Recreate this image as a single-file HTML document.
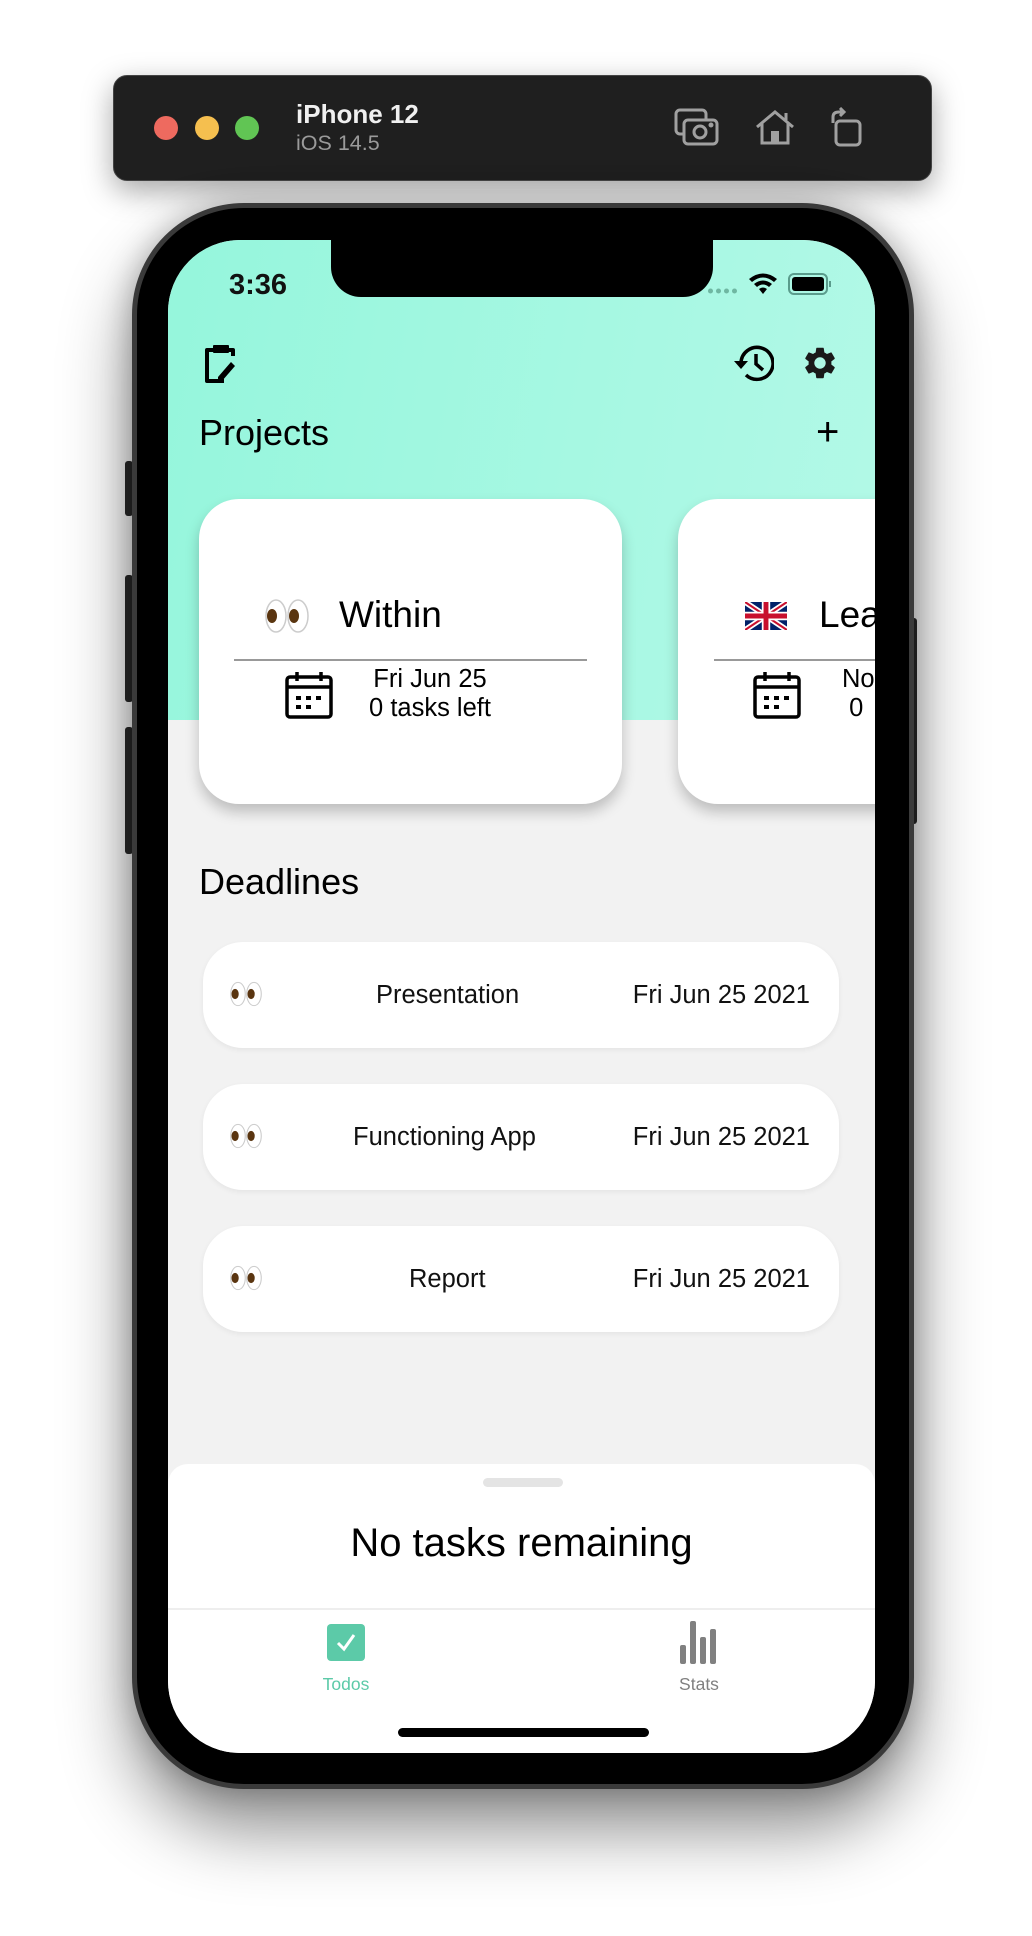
<!DOCTYPE html>
<html><head><meta charset="utf-8"><style>
*{margin:0;padding:0;box-sizing:border-box}
body{width:1032px;height:1936px;background:#fff;position:relative;overflow:hidden;font-family:"Liberation Sans",sans-serif}
.a{position:absolute}
.tb{left:113px;top:75px;width:819px;height:106px;background:#1f1f1f;border-radius:14px;border:1px solid #444;box-shadow:0 10px 30px rgba(0,0,0,.35)}
.dot{width:24px;height:24px;border-radius:50%;top:116px}
.phone{left:132px;top:203px;width:782px;height:1586px;border-radius:112px;background:#000;border:5px solid #3a3a3a;box-shadow:0 40px 70px rgba(0,0,0,.45),0 0 30px rgba(0,0,0,.25)}
.screen{left:168px;top:240px;width:707px;height:1513px;border-radius:72px;background:#f2f2f2;overflow:hidden}
.card{background:#fff;border-radius:40px;box-shadow:0 8px 14px rgba(0,0,0,.22)}
.row{left:35px;width:636px;height:106px;background:#fff;border-radius:40px;box-shadow:0 2px 6px rgba(0,0,0,.06)}
.row span{position:absolute;top:38px;font-size:25.5px;color:#111;line-height:30px}
</style></head><body>
<div class="a tb"></div>
<div class="a dot" style="left:154px;background:#ee6a5f"></div>
<div class="a dot" style="left:195px;background:#f5bf4f"></div>
<div class="a dot" style="left:235px;background:#61c554"></div>
<div class="a" style="left:296px;top:99px;color:#f0f0f0;font-size:26px;font-weight:bold">iPhone 12</div>
<div class="a" style="left:296px;top:131px;color:#9a9a9a;font-size:21.5px">iOS 14.5</div>
<svg class="a" style="left:674px;top:108px" width="46" height="38" viewBox="0 0 46 38" fill="none" stroke="#a0a0a0" stroke-width="3"><rect x="2" y="2" width="30" height="24" rx="4"/><rect x="10" y="12" width="33" height="24" rx="4" fill="#1f1f1f"/><circle cx="26" cy="24" r="6"/><circle cx="37" cy="17" r="1" fill="#a0a0a0"/></svg>
<svg class="a" style="left:755px;top:110px" width="40" height="36" viewBox="0 0 40 36" fill="none" stroke="#a0a0a0" stroke-width="3"><path d="M2 17 L20 2 L38 17 M7 13 V33 H33 V13 M31 3 V10"/><rect x="16" y="21" width="8" height="12" fill="#a0a0a0" stroke="none"/></svg>
<svg class="a" style="left:829px;top:107px" width="34" height="40" viewBox="0 0 34 40" fill="none" stroke="#a0a0a0" stroke-width="3"><rect x="7" y="14" width="24" height="24" rx="4"/><path d="M4 16 V10 Q4 5 10 5 H13"/><path d="M11 1 L15 5 L11 9" fill="#a0a0a0"/></svg>

<div class="a" style="left:125px;top:461px;width:8px;height:55px;background:#2a2a2a;border-radius:3px"></div>
<div class="a" style="left:125px;top:575px;width:8px;height:127px;background:#2a2a2a;border-radius:3px"></div>
<div class="a" style="left:125px;top:727px;width:8px;height:127px;background:#2a2a2a;border-radius:3px"></div>
<div class="a" style="left:909px;top:618px;width:8px;height:206px;background:#2a2a2a;border-radius:3px"></div>
<div class="a phone"></div>
<div class="a screen">
  <div class="a" style="left:0;top:0;width:707px;height:480px;background:linear-gradient(100deg,#95f6dc,#b3f9e7)"></div>
  <div class="a" style="left:163px;top:-5px;width:382px;height:62px;background:#000;border-radius:0 0 30px 30px"></div>
  <div class="a" style="left:61px;top:29px;font-size:29px;font-weight:bold;color:#111">3:36</div>
  <svg class="a" style="left:540px;top:30px" width="130" height="30" viewBox="0 0 130 30"><g fill="#6fb7a2"><circle cx="2.5" cy="21" r="2.5"/><circle cx="10.5" cy="21" r="2.5"/><circle cx="18.5" cy="21" r="2.5"/><circle cx="26.5" cy="21" r="2.5"/></g><path d="M41 9 Q55 -2 69 9 L66 12 Q55 3 44 12Z M46 14 Q55 7 64 14 L61 17 Q55 12 49 17Z M51 19 Q55 16 59 19 L55 24Z" fill="#000"/><rect x="81" y="4" width="38" height="20" rx="5" fill="none" stroke="#5a9c8c" stroke-width="2"/><rect x="84" y="7" width="32" height="14" rx="3" fill="#000"/><rect x="121" y="11" width="2" height="6" fill="#5a9c8c"/></svg>
  <svg class="a" style="left:34px;top:104px" width="36" height="40" viewBox="0 0 36 40"><path d="M11 6 H5 V37 H22 M27 6 H31 V12" fill="none" stroke="#000" stroke-width="4" stroke-linejoin="round"/><rect x="11" y="1" width="16" height="8" rx="1" fill="#000"/><path d="M16 33 L29 18 L33 22 L20 37 L16 37Z" fill="#000"/></svg>
  <svg class="a" style="left:564px;top:104px" width="42" height="38" viewBox="0 0 42 38"><path d="M9 19 A16 16 0 1 1 14 31" fill="none" stroke="#000" stroke-width="3.5"/><path d="M2 17 L9 25 L16 17Z" fill="#000"/><path d="M24 10 V20 L31 26" fill="none" stroke="#000" stroke-width="3.5"/></svg>
  <svg class="a" style="left:633px;top:104px" width="38" height="38" viewBox="0 0 24 24"><path fill="#1a1a1a" d="M19.14 12.94c.04-.3.06-.61.06-.94s-.02-.64-.07-.94l2.03-1.580a.49.49 0 0 0 .12-.61l-1.92-3.32a.49.49 0 0 0-.59-.22l-2.39.96c-.5-.38-1.030-.7-1.62-.94l-.36-2.54a.48.48 0 0 0-.48-.41h-3.84a.48.48 0 0 0-.47.41l-.36 2.54c-.59.24-1.13.57-1.62.94l-2.39-.96a.48.48 0 0 0-.59.22L2.74 8.87a.48.48 0 0 0 .12.61l2.03 1.58c-.05.3-.09.63-.09.94s.02.64.07.94l-2.03 1.58a.49.49 0 0 0-.12.61l1.92 3.32c.12.22.37.29.59.22l2.39-.96c.5.38 1.03.7 1.62.94l.36 2.54c.05.24.24.41.48.41h3.84c.24 0 .44-.17.47-.41l.36-2.54c.59-.24 1.13-.56 1.62-.94l2.39.96c.22.08.47 0 .59-.22l1.92-3.32a.48.48 0 0 0-.12-.61l-2.010-1.58zM12 15.6A3.6 3.6 0 1 1 12 8.4a3.6 3.6 0 0 1 0 7.2z"/></svg>
  <div class="a" style="left:31px;top:172px;font-size:36px;color:#000">Projects</div>
  <div class="a" style="left:648px;top:172px;font-size:40px;line-height:40px;color:#000">+</div>

  <div class="a card" style="left:31px;top:259px;width:423px;height:305px"></div>
  <svg class="a" style="left:97px;top:358px" width="44" height="36" viewBox="0 0 44 36"><ellipse cx="11" cy="18" rx="10" ry="16" fill="#fff" stroke="#ccc" stroke-width="1.5"/><ellipse cx="33" cy="18" rx="10" ry="16" fill="#fff" stroke="#ccc" stroke-width="1.5"/><ellipse cx="7" cy="18" rx="5" ry="7" fill="#5a3510"/><ellipse cx="29" cy="18" rx="5" ry="7" fill="#5a3510"/></svg>
  <div class="a" style="left:171px;top:354px;font-size:37px;color:#000">Within</div>
  <div class="a" style="left:66px;top:419px;width:353px;height:1.5px;background:#999"></div>
  <svg class="a" style="left:117px;top:431px" width="48" height="48" viewBox="0 0 48 48" fill="none" stroke="#000" stroke-width="3.5"><rect x="2" y="6" width="44" height="40" rx="3"/><path d="M2 16 H46 M12 1 V10 M36 1 V10"/><g fill="#000" stroke="none"><rect x="11" y="25" width="5" height="4"/><rect x="21" y="25" width="5" height="4"/><rect x="31" y="25" width="5" height="4"/><rect x="11" y="34" width="5" height="4"/><rect x="21" y="34" width="5" height="4"/></g></svg>
  <div class="a" style="left:172px;top:425px;width:180px;text-align:center;font-size:25.5px;line-height:29px;color:#000">Fri Jun 25<br>0 tasks left</div>

  <div class="a card" style="left:510px;top:259px;width:423px;height:305px"></div>
  <svg class="a" style="left:577px;top:362px" width="42" height="28" viewBox="0 0 60 40"><rect width="60" height="40" fill="#012169"/><path d="M0 0L60 40M60 0L0 40" stroke="#fff" stroke-width="8"/><path d="M0 0L60 40M60 0L0 40" stroke="#C8102E" stroke-width="3"/><path d="M30 0V40M0 20H60" stroke="#fff" stroke-width="12"/><path d="M30 0V40M0 20H60" stroke="#C8102E" stroke-width="7"/></svg>
  <div class="a" style="left:651px;top:354px;font-size:37px;color:#000">Lea</div>
  <div class="a" style="left:546px;top:419px;width:200px;height:1.5px;background:#999"></div>
  <svg class="a" style="left:585px;top:431px" width="48" height="48" viewBox="0 0 48 48" fill="none" stroke="#000" stroke-width="3.5"><rect x="2" y="6" width="44" height="40" rx="3"/><path d="M2 16 H46 M12 1 V10 M36 1 V10"/><g fill="#000" stroke="none"><rect x="11" y="25" width="5" height="4"/><rect x="21" y="25" width="5" height="4"/><rect x="31" y="25" width="5" height="4"/><rect x="11" y="34" width="5" height="4"/><rect x="21" y="34" width="5" height="4"/></g></svg>
  <div class="a" style="left:674px;top:425px;font-size:25.5px;line-height:29px;color:#000">No<br>&nbsp;0</div>

  <div class="a" style="left:31px;top:621px;font-size:36px;color:#000">Deadlines</div>

  <div class="a row" style="top:702px"><svg class="a" style="left:27px;top:38px" width="32" height="28" viewBox="0 0 44 36"><ellipse cx="11" cy="18" rx="10" ry="16" fill="#fff" stroke="#ccc" stroke-width="1.5"/><ellipse cx="33" cy="18" rx="10" ry="16" fill="#fff" stroke="#ccc" stroke-width="1.5"/><ellipse cx="7" cy="18" rx="5" ry="7" fill="#5a3510"/><ellipse cx="29" cy="18" rx="5" ry="7" fill="#5a3510"/></svg><span style="left:173px">Presentation</span><span style="right:29px">Fri Jun 25 2021</span></div>
  <div class="a row" style="top:844px"><svg class="a" style="left:27px;top:38px" width="32" height="28" viewBox="0 0 44 36"><ellipse cx="11" cy="18" rx="10" ry="16" fill="#fff" stroke="#ccc" stroke-width="1.5"/><ellipse cx="33" cy="18" rx="10" ry="16" fill="#fff" stroke="#ccc" stroke-width="1.5"/><ellipse cx="7" cy="18" rx="5" ry="7" fill="#5a3510"/><ellipse cx="29" cy="18" rx="5" ry="7" fill="#5a3510"/></svg><span style="left:150px">Functioning App</span><span style="right:29px">Fri Jun 25 2021</span></div>
  <div class="a row" style="top:986px"><svg class="a" style="left:27px;top:38px" width="32" height="28" viewBox="0 0 44 36"><ellipse cx="11" cy="18" rx="10" ry="16" fill="#fff" stroke="#ccc" stroke-width="1.5"/><ellipse cx="33" cy="18" rx="10" ry="16" fill="#fff" stroke="#ccc" stroke-width="1.5"/><ellipse cx="7" cy="18" rx="5" ry="7" fill="#5a3510"/><ellipse cx="29" cy="18" rx="5" ry="7" fill="#5a3510"/></svg><span style="left:206px">Report</span><span style="right:29px">Fri Jun 25 2021</span></div>

  <div class="a" style="left:0;top:1224px;width:707px;height:300px;background:#fff;border-radius:20px 20px 0 0"></div>
  <div class="a" style="left:315px;top:1238px;width:80px;height:9px;background:#e4e4e4;border-radius:5px"></div>
  <div class="a" style="left:0;top:1281px;width:707px;text-align:center;font-size:40px;color:#000">No tasks remaining</div>
  <div class="a" style="left:0;top:1368px;width:707px;height:2px;background:#eeeeee"></div>
  <svg class="a" style="left:159px;top:1384px" width="38" height="37" viewBox="0 0 38 37"><rect width="38" height="37" rx="4" fill="#5ccaa8"/><path d="M11 19 L17 25 L27 11" fill="none" stroke="#fff" stroke-width="3"/></svg>
  <div class="a" style="left:128px;top:1434px;width:100px;text-align:center;font-size:17.5px;color:#5ccaa8">Todos</div>
  <svg class="a" style="left:512px;top:1381px" width="38" height="43" viewBox="0 0 38 43" fill="#808080"><rect x="0" y="24" width="6" height="19" rx="2"/><rect x="10" y="0" width="6" height="43" rx="2"/><rect x="20" y="16" width="6" height="27" rx="2"/><rect x="30" y="8" width="6" height="35" rx="2"/></svg>
  <div class="a" style="left:481px;top:1434px;width:100px;text-align:center;font-size:17.5px;color:#808080">Stats</div>
  <div class="a" style="left:230px;top:1488px;width:251px;height:9px;background:#000;border-radius:5px"></div>
</div>
</body></html>
